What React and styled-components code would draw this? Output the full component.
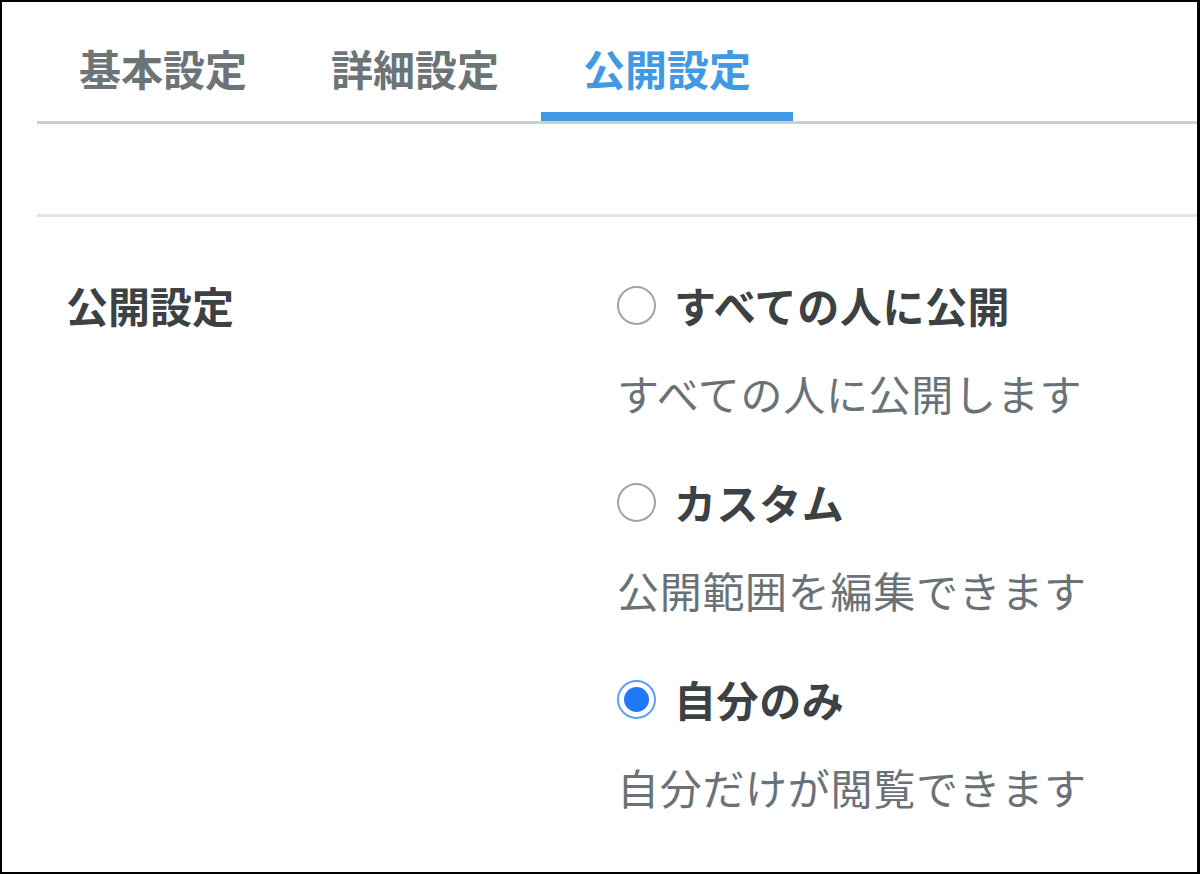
import React from "react";
import styled, { createGlobalStyle } from "styled-components";

const Global = createGlobalStyle`
  html, body { margin: 0; padding: 0; background: #fff; }
  body { font-family: "Noto Sans CJK JP", "Noto Sans", sans-serif; }
  * { box-sizing: border-box; }
`;

const Frame = styled.div`
  width: 1200px;
  height: 874px;
  border: 2px solid #000;
  border-right-width: 3px;
  background: #fff;
  padding-left: 35px;
  overflow: hidden;
`;

const TabBar = styled.div`
  display: flex;
  border-bottom: 3px solid #c6d0d5;
`;

const Tab = styled.div`
  padding: 45px 42px 23px;
  font-size: 42px;
  line-height: 42px;
  font-weight: 700;
  color: ${(p) => (p.$active ? "#4199e1" : "#6d7478")};
  border-bottom: 9px solid ${(p) => (p.$active ? "#4199e1" : "transparent")};
  white-space: nowrap;
`;

const Toolbar = styled.div`
  height: 93px;
  border-bottom: 3px solid #dfe6eb;
`;

const Section = styled.div`
  display: grid;
  grid-template-columns: 551px 1fr;
  padding: 58px 0 0 29px;
`;

const FieldLabel = styled.div`
  font-size: 42px;
  line-height: 60px;
  font-weight: 700;
  color: #3c4144;
`;

const Options = styled.div`
  display: flex;
  flex-direction: column;
  gap: 49px;
`;

const Option = styled.div`
  display: flex;
  flex-direction: column;
  gap: 28px;
`;

const OptionHead = styled.label`
  display: flex;
  align-items: center;
  height: 60px;
  gap: 18px;
  cursor: pointer;
`;

const Radio = styled.span`
  flex: none;
  width: 39px;
  height: 39px;
  border-radius: 50%;
  border: 2px solid ${(p) => (p.$checked ? "#5ea0f7" : "#a3a3a3")};
  display: flex;
  align-items: center;
  justify-content: center;
  background: #fff;
  &::before {
    content: "";
    width: 25px;
    height: 25px;
    border-radius: 50%;
    background: ${(p) => (p.$checked ? "#1f78f5" : "transparent")};
  }
`;

const OptionTitle = styled.span`
  font-size: 42px;
  line-height: 60px;
  font-weight: 700;
  letter-spacing: 0.6px;
  color: #3c4144;
`;

const OptionDesc = styled.div`
  font-size: 42px;
  line-height: 60px;
  font-weight: 400;
  letter-spacing: 0.7px;
  color: #6b7277;
`;

const options = [
  { title: "すべての人に公開", desc: "すべての人に公開します", checked: false },
  { title: "カスタム", desc: "公開範囲を編集できます", checked: false },
  { title: "自分のみ", desc: "自分だけが閲覧できます", checked: true },
];

export default function App() {
  return (
    <>
      <Global />
      <Frame>
        <TabBar>
          <Tab>基本設定</Tab>
          <Tab>詳細設定</Tab>
          <Tab $active>公開設定</Tab>
        </TabBar>
        <Toolbar />
        <Section>
          <FieldLabel>公開設定</FieldLabel>
          <Options>
            {options.map((o) => (
              <Option key={o.title}>
                <OptionHead>
                  <Radio $checked={o.checked} />
                  <OptionTitle>{o.title}</OptionTitle>
                </OptionHead>
                <OptionDesc>{o.desc}</OptionDesc>
              </Option>
            ))}
          </Options>
        </Section>
      </Frame>
    </>
  );
}
